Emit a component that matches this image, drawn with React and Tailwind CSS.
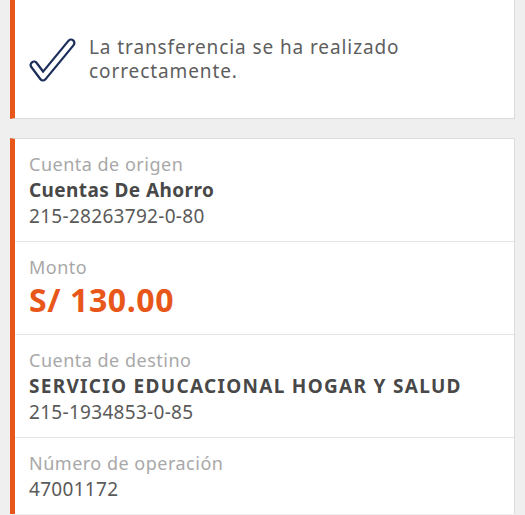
import React from "react";

const rows = [
  { label: "Cuenta de origen", title: "Cuentas De Ahorro", value: "215-28263792-0-80" },
  { label: "Monto", amount: "S/ 130.00" },
  { label: "Cuenta de destino", title: "SERVICIO EDUCACIONAL HOGAR Y SALUD", value: "215-1934853-0-85", upper: true },
  { label: "Número de operación", value: "47001172" },
];

function CheckIcon() {
  return (
    <svg width="48" height="46" viewBox="0 0 48 46" fill="none">
      <path d="M5 28 L14 40 L42 6" stroke="#1c2f5b" strokeWidth="9" strokeLinecap="round" strokeLinejoin="round" />
      <path d="M5 28 L14 40 L42 6" stroke="#ffffff" strokeWidth="4.5" strokeLinecap="round" strokeLinejoin="round" />
    </svg>
  );
}

export default function App() {
  return (
    <div className="w-[525px] h-[515px] overflow-hidden bg-[#efefef] px-[10px] font-['Noto_Sans','Open_Sans',sans-serif]">
      <div className="h-[119px] flex items-center bg-white border-l-[5px] border-l-[#e8561a] border-r border-b border-[#dcdcdc]">
        <div className="pl-[14px] pr-[12px] pt-[2px]">
          <CheckIcon />
        </div>
        <p className="text-[19px] leading-[24px] text-[#5e5e5e] tracking-[0.9px]">
          La transferencia se ha realizado
          <br />
          correctamente.
        </p>
      </div>

      <div className="mt-[19px] bg-white border-l-[5px] border-l-[#e8561a] border-r border-t border-[#dcdcdc]">
        {rows.map((row, i) => (
          <div
            key={row.label}
            className={`pl-[14px] pt-[12px] ${row.amount ? "pb-[14px]" : "pb-[12px]"} ${
              i < rows.length - 1 ? "border-b border-[#e4e4e4]" : ""
            }`}
          >
            <div className="text-[18px] leading-[26px] tracking-[0.5px] text-[#a8a8a8]">{row.label}</div>
            {row.title && (
              <div
                className={`text-[19px] leading-[26px] font-bold text-[#484848] ${
                  row.upper ? "tracking-[1.3px]" : "tracking-[0.4px]"
                }`}
              >
                {row.title}
              </div>
            )}
            {row.amount && (
              <div className="text-[32px] leading-[40px] font-bold tracking-[0.6px] text-[#e8561a]">{row.amount}</div>
            )}
            {row.value && (
              <div className="text-[19px] leading-[26px] tracking-[0.3px] text-[#5a5a5a]">{row.value}</div>
            )}
          </div>
        ))}
      </div>
    </div>
  );
}
